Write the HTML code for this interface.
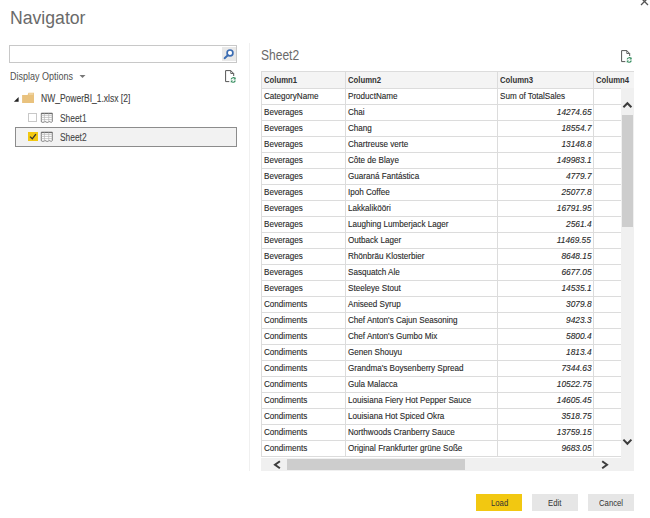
<!DOCTYPE html>
<html><head><meta charset="utf-8">
<style>
*{margin:0;padding:0;box-sizing:border-box}
html,body{width:650px;height:518px;overflow:hidden;background:#fff;font-family:"Liberation Sans",sans-serif;color:#333}
.a{position:absolute}
.t{position:absolute;white-space:nowrap;line-height:normal}
</style></head><body>
<svg class="a" style="left:639px;top:-4px" width="11" height="11" viewBox="0 0 11 11"><path d="M2 2 L9 9 M9 2 L2 9" stroke="#555" stroke-width="1.3"/></svg>
<!-- search -->
<div class="a" style="left:9px;top:45px;width:228px;height:18px;border:1px solid #c8c8c8;background:#fff"></div>
<div class="a" style="left:222px;top:47px;width:13.5px;height:14px;background:#e8e8e8"></div>
<svg class="a" style="left:222px;top:47px" width="15" height="15" viewBox="0 0 15 15"><circle cx="8" cy="5.9" r="2.9" fill="#fff" stroke="#3b6db3" stroke-width="1.7"/><path d="M5.8 8.2 L2.6 11.2" stroke="#3b6db3" stroke-width="1.9" stroke-linecap="round"/></svg>
<svg class="a" style="left:79px;top:74px" width="7" height="5" viewBox="0 0 7 5"><path d="M0.5 1 L6.5 1 L3.5 4 Z" fill="#777"/></svg>
<svg class="a" style="left:220px;top:66px" width="22" height="20" viewBox="0 0 22 20"><path d="M9.3 15.6 H5.6 V4.6 H10.8 L13.7 7.5 V10" fill="none" stroke="#555" stroke-width="1"/><path d="M10.8 4.6 V7.5 H13.7" fill="none" stroke="#555" stroke-width="0.9"/><path d="M11.1 13.4 A2.3 2.3 0 0 1 15.2 12.6" fill="none" stroke="#3a8f62" stroke-width="1.1"/><path d="M15.6 11.2 V13.5 H13.4 Z" fill="#3a8f62"/><path d="M15.3 14.5 A2.3 2.3 0 0 1 11.2 15.3" fill="none" stroke="#3a8f62" stroke-width="1.1"/><path d="M10.8 16.7 V14.4 H13 Z" fill="#3a8f62"/></svg>
<div class="a" style="left:249px;top:43px;width:1px;height:428px;background:#f0f0f0"></div>
<!-- tree -->
<svg class="a" style="left:10px;top:88px" width="30" height="20" viewBox="0 0 30 20"><path d="M8.6 9 V13.7 H3.9 Z" fill="#222"/><path d="M12.1 6.9 H17.6 L18.5 4.8 H24 V15 H12.1 Z" fill="#e9c27e"/><path d="M19 5.6 H23.3 V6.6 H18.7 Z" fill="#f6e2bc"/></svg>
<div class="a" style="left:15px;top:127px;width:222px;height:20px;border:1px solid #8c8c8c;background:#f2f2f2"></div>
<div class="a" style="left:28.3px;top:113.1px;width:9px;height:9px;border:1.2px solid #c8c8c8;background:#fff"></div>
<div class="a" style="left:28px;top:132px;width:9.5px;height:9px;background:#f2c811"></div>
<svg class="a" style="left:28px;top:132px" width="10" height="9" viewBox="0 0 10 9"><path d="M2 4.6 L4.3 6.8 L7.9 2.2" fill="none" stroke="#333" stroke-width="1.3"/></svg>
<svg class="a" style="left:40.2px;top:112.2px" width="14" height="12" viewBox="0 0 14 12"><path d="M1.3 1.2 H12.3 V9.6 Q11.3 10.8 10.3 10 Q9.3 9.2 8.3 10 Q7.2 10.9 6.1 10 Q5.1 9.1 4.1 10 Q3 10.9 1.3 9.8 Z" fill="#fff" stroke="#707070" stroke-width="0.9"/><path d="M1.3 1.6 H12.3" stroke="#666" stroke-width="1"/><path d="M1.5 3.6 H12.1 M1.5 5.5 H12.1 M1.5 7.6 H12.1 M4.4 1.5 V9.6 M8.7 1.5 V9.6" stroke="#b8b8b8" stroke-width="0.7"/></svg>
<svg class="a" style="left:40.2px;top:131.2px" width="14" height="12" viewBox="0 0 14 12"><path d="M1.3 1.2 H12.3 V9.6 Q11.3 10.8 10.3 10 Q9.3 9.2 8.3 10 Q7.2 10.9 6.1 10 Q5.1 9.1 4.1 10 Q3 10.9 1.3 9.8 Z" fill="#fff" stroke="#707070" stroke-width="0.9"/><path d="M1.3 1.6 H12.3" stroke="#666" stroke-width="1"/><path d="M1.5 3.6 H12.1 M1.5 5.5 H12.1 M1.5 7.6 H12.1 M4.4 1.5 V9.6 M8.7 1.5 V9.6" stroke="#b8b8b8" stroke-width="0.7"/></svg>
<svg class="a" style="left:616px;top:45.5px" width="22" height="20" viewBox="0 0 22 20"><path d="M9.3 15.6 H5.6 V4.6 H10.8 L13.7 7.5 V10" fill="none" stroke="#555" stroke-width="1"/><path d="M10.8 4.6 V7.5 H13.7" fill="none" stroke="#555" stroke-width="0.9"/><path d="M11.1 13.4 A2.3 2.3 0 0 1 15.2 12.6" fill="none" stroke="#3a8f62" stroke-width="1.1"/><path d="M15.6 11.2 V13.5 H13.4 Z" fill="#3a8f62"/><path d="M15.3 14.5 A2.3 2.3 0 0 1 11.2 15.3" fill="none" stroke="#3a8f62" stroke-width="1.1"/><path d="M10.8 16.7 V14.4 H13 Z" fill="#3a8f62"/></svg>
<!-- table -->
<div class="a" style="left:261px;top:71px;width:373px;height:17px;background:#f4f4f4"></div>
<div class="a" style="left:261px;top:71px;width:373px;height:1px;background:#dcdcdc"></div>
<div class="a" style="left:261px;top:88px;width:373px;height:1px;background:#dcdcdc"></div>
<div class="a" style="left:261px;top:104px;width:373px;height:1px;background:#dcdcdc"></div>
<div class="a" style="left:261px;top:120px;width:373px;height:1px;background:#dcdcdc"></div>
<div class="a" style="left:261px;top:136px;width:373px;height:1px;background:#dcdcdc"></div>
<div class="a" style="left:261px;top:152px;width:373px;height:1px;background:#dcdcdc"></div>
<div class="a" style="left:261px;top:168px;width:373px;height:1px;background:#dcdcdc"></div>
<div class="a" style="left:261px;top:184px;width:373px;height:1px;background:#dcdcdc"></div>
<div class="a" style="left:261px;top:200px;width:373px;height:1px;background:#dcdcdc"></div>
<div class="a" style="left:261px;top:216px;width:373px;height:1px;background:#dcdcdc"></div>
<div class="a" style="left:261px;top:232px;width:373px;height:1px;background:#dcdcdc"></div>
<div class="a" style="left:261px;top:248px;width:373px;height:1px;background:#dcdcdc"></div>
<div class="a" style="left:261px;top:264px;width:373px;height:1px;background:#dcdcdc"></div>
<div class="a" style="left:261px;top:280px;width:373px;height:1px;background:#dcdcdc"></div>
<div class="a" style="left:261px;top:296px;width:373px;height:1px;background:#dcdcdc"></div>
<div class="a" style="left:261px;top:312px;width:373px;height:1px;background:#dcdcdc"></div>
<div class="a" style="left:261px;top:328px;width:373px;height:1px;background:#dcdcdc"></div>
<div class="a" style="left:261px;top:344px;width:373px;height:1px;background:#dcdcdc"></div>
<div class="a" style="left:261px;top:360px;width:373px;height:1px;background:#dcdcdc"></div>
<div class="a" style="left:261px;top:376px;width:373px;height:1px;background:#dcdcdc"></div>
<div class="a" style="left:261px;top:392px;width:373px;height:1px;background:#dcdcdc"></div>
<div class="a" style="left:261px;top:408px;width:373px;height:1px;background:#dcdcdc"></div>
<div class="a" style="left:261px;top:424px;width:373px;height:1px;background:#dcdcdc"></div>
<div class="a" style="left:261px;top:440px;width:373px;height:1px;background:#dcdcdc"></div>
<div class="a" style="left:261px;top:456px;width:373px;height:1px;background:#dcdcdc"></div>
<div class="a" style="left:261px;top:71px;width:1px;height:386px;background:#dcdcdc"></div>
<div class="a" style="left:345px;top:71px;width:1px;height:386px;background:#dcdcdc"></div>
<div class="a" style="left:497px;top:71px;width:1px;height:386px;background:#dcdcdc"></div>
<div class="a" style="left:593px;top:71px;width:1px;height:386px;background:#dcdcdc"></div>
<div class="t" style="left:263.50px;top:74.66px;font-size:9px;color:#333;transform:scaleX(0.86);transform-origin:left top;font-weight:bold">Column1</div>
<div class="t" style="left:347.50px;top:74.66px;font-size:9px;color:#333;transform:scaleX(0.86);transform-origin:left top;font-weight:bold">Column2</div>
<div class="t" style="left:499.50px;top:74.66px;font-size:9px;color:#333;transform:scaleX(0.86);transform-origin:left top;font-weight:bold">Column3</div>
<div class="t" style="left:595.50px;top:74.66px;font-size:9px;color:#333;transform:scaleX(0.86);transform-origin:left top;font-weight:bold">Column4</div>
<div class="t" style="left:263.50px;top:91.45px;font-size:9px;color:#262626;transform:scaleX(0.9);transform-origin:left top;-webkit-text-stroke:0.12px #333">CategoryName</div>
<div class="t" style="left:347.50px;top:91.45px;font-size:9px;color:#262626;transform:scaleX(0.9);transform-origin:left top;-webkit-text-stroke:0.12px #333">ProductName</div>
<div class="t" style="left:499.50px;top:91.45px;font-size:9px;color:#262626;transform:scaleX(0.9);transform-origin:left top;-webkit-text-stroke:0.12px #333">Sum of TotalSales</div>
<div class="t" style="left:263.50px;top:107.45px;font-size:9px;color:#262626;transform:scaleX(0.9);transform-origin:left top;-webkit-text-stroke:0.12px #333">Beverages</div>
<div class="t" style="left:347.50px;top:107.45px;font-size:9px;color:#262626;transform:scaleX(0.9);transform-origin:left top;-webkit-text-stroke:0.12px #333">Chai</div>
<div class="t" style="right:58.80px;top:107.45px;font-size:9px;color:#262626;transform:scaleX(0.925);transform-origin:right top;font-style:italic;-webkit-text-stroke:0.12px #333">14274.65</div>
<div class="t" style="left:263.50px;top:123.45px;font-size:9px;color:#262626;transform:scaleX(0.9);transform-origin:left top;-webkit-text-stroke:0.12px #333">Beverages</div>
<div class="t" style="left:347.50px;top:123.45px;font-size:9px;color:#262626;transform:scaleX(0.9);transform-origin:left top;-webkit-text-stroke:0.12px #333">Chang</div>
<div class="t" style="right:58.80px;top:123.45px;font-size:9px;color:#262626;transform:scaleX(0.925);transform-origin:right top;font-style:italic;-webkit-text-stroke:0.12px #333">18554.7</div>
<div class="t" style="left:263.50px;top:139.45px;font-size:9px;color:#262626;transform:scaleX(0.9);transform-origin:left top;-webkit-text-stroke:0.12px #333">Beverages</div>
<div class="t" style="left:347.50px;top:139.45px;font-size:9px;color:#262626;transform:scaleX(0.9);transform-origin:left top;-webkit-text-stroke:0.12px #333">Chartreuse verte</div>
<div class="t" style="right:58.80px;top:139.45px;font-size:9px;color:#262626;transform:scaleX(0.925);transform-origin:right top;font-style:italic;-webkit-text-stroke:0.12px #333">13148.8</div>
<div class="t" style="left:263.50px;top:155.45px;font-size:9px;color:#262626;transform:scaleX(0.9);transform-origin:left top;-webkit-text-stroke:0.12px #333">Beverages</div>
<div class="t" style="left:347.50px;top:155.45px;font-size:9px;color:#262626;transform:scaleX(0.9);transform-origin:left top;-webkit-text-stroke:0.12px #333">Côte de Blaye</div>
<div class="t" style="right:58.80px;top:155.45px;font-size:9px;color:#262626;transform:scaleX(0.925);transform-origin:right top;font-style:italic;-webkit-text-stroke:0.12px #333">149983.1</div>
<div class="t" style="left:263.50px;top:171.45px;font-size:9px;color:#262626;transform:scaleX(0.9);transform-origin:left top;-webkit-text-stroke:0.12px #333">Beverages</div>
<div class="t" style="left:347.50px;top:171.45px;font-size:9px;color:#262626;transform:scaleX(0.9);transform-origin:left top;-webkit-text-stroke:0.12px #333">Guaraná Fantástica</div>
<div class="t" style="right:58.80px;top:171.45px;font-size:9px;color:#262626;transform:scaleX(0.925);transform-origin:right top;font-style:italic;-webkit-text-stroke:0.12px #333">4779.7</div>
<div class="t" style="left:263.50px;top:187.45px;font-size:9px;color:#262626;transform:scaleX(0.9);transform-origin:left top;-webkit-text-stroke:0.12px #333">Beverages</div>
<div class="t" style="left:347.50px;top:187.45px;font-size:9px;color:#262626;transform:scaleX(0.9);transform-origin:left top;-webkit-text-stroke:0.12px #333">Ipoh Coffee</div>
<div class="t" style="right:58.80px;top:187.45px;font-size:9px;color:#262626;transform:scaleX(0.925);transform-origin:right top;font-style:italic;-webkit-text-stroke:0.12px #333">25077.8</div>
<div class="t" style="left:263.50px;top:203.45px;font-size:9px;color:#262626;transform:scaleX(0.9);transform-origin:left top;-webkit-text-stroke:0.12px #333">Beverages</div>
<div class="t" style="left:347.50px;top:203.45px;font-size:9px;color:#262626;transform:scaleX(0.9);transform-origin:left top;-webkit-text-stroke:0.12px #333">Lakkalikööri</div>
<div class="t" style="right:58.80px;top:203.45px;font-size:9px;color:#262626;transform:scaleX(0.925);transform-origin:right top;font-style:italic;-webkit-text-stroke:0.12px #333">16791.95</div>
<div class="t" style="left:263.50px;top:219.45px;font-size:9px;color:#262626;transform:scaleX(0.9);transform-origin:left top;-webkit-text-stroke:0.12px #333">Beverages</div>
<div class="t" style="left:347.50px;top:219.45px;font-size:9px;color:#262626;transform:scaleX(0.9);transform-origin:left top;-webkit-text-stroke:0.12px #333">Laughing Lumberjack Lager</div>
<div class="t" style="right:58.80px;top:219.45px;font-size:9px;color:#262626;transform:scaleX(0.925);transform-origin:right top;font-style:italic;-webkit-text-stroke:0.12px #333">2561.4</div>
<div class="t" style="left:263.50px;top:235.45px;font-size:9px;color:#262626;transform:scaleX(0.9);transform-origin:left top;-webkit-text-stroke:0.12px #333">Beverages</div>
<div class="t" style="left:347.50px;top:235.45px;font-size:9px;color:#262626;transform:scaleX(0.9);transform-origin:left top;-webkit-text-stroke:0.12px #333">Outback Lager</div>
<div class="t" style="right:58.80px;top:235.45px;font-size:9px;color:#262626;transform:scaleX(0.925);transform-origin:right top;font-style:italic;-webkit-text-stroke:0.12px #333">11469.55</div>
<div class="t" style="left:263.50px;top:251.46px;font-size:9px;color:#262626;transform:scaleX(0.9);transform-origin:left top;-webkit-text-stroke:0.12px #333">Beverages</div>
<div class="t" style="left:347.50px;top:251.46px;font-size:9px;color:#262626;transform:scaleX(0.9);transform-origin:left top;-webkit-text-stroke:0.12px #333">Rhönbräu Klosterbier</div>
<div class="t" style="right:58.80px;top:251.46px;font-size:9px;color:#262626;transform:scaleX(0.925);transform-origin:right top;font-style:italic;-webkit-text-stroke:0.12px #333">8648.15</div>
<div class="t" style="left:263.50px;top:267.46px;font-size:9px;color:#262626;transform:scaleX(0.9);transform-origin:left top;-webkit-text-stroke:0.12px #333">Beverages</div>
<div class="t" style="left:347.50px;top:267.46px;font-size:9px;color:#262626;transform:scaleX(0.9);transform-origin:left top;-webkit-text-stroke:0.12px #333">Sasquatch Ale</div>
<div class="t" style="right:58.80px;top:267.46px;font-size:9px;color:#262626;transform:scaleX(0.925);transform-origin:right top;font-style:italic;-webkit-text-stroke:0.12px #333">6677.05</div>
<div class="t" style="left:263.50px;top:283.46px;font-size:9px;color:#262626;transform:scaleX(0.9);transform-origin:left top;-webkit-text-stroke:0.12px #333">Beverages</div>
<div class="t" style="left:347.50px;top:283.46px;font-size:9px;color:#262626;transform:scaleX(0.9);transform-origin:left top;-webkit-text-stroke:0.12px #333">Steeleye Stout</div>
<div class="t" style="right:58.80px;top:283.46px;font-size:9px;color:#262626;transform:scaleX(0.925);transform-origin:right top;font-style:italic;-webkit-text-stroke:0.12px #333">14535.1</div>
<div class="t" style="left:263.50px;top:299.46px;font-size:9px;color:#262626;transform:scaleX(0.9);transform-origin:left top;-webkit-text-stroke:0.12px #333">Condiments</div>
<div class="t" style="left:347.50px;top:299.46px;font-size:9px;color:#262626;transform:scaleX(0.9);transform-origin:left top;-webkit-text-stroke:0.12px #333">Aniseed Syrup</div>
<div class="t" style="right:58.80px;top:299.46px;font-size:9px;color:#262626;transform:scaleX(0.925);transform-origin:right top;font-style:italic;-webkit-text-stroke:0.12px #333">3079.8</div>
<div class="t" style="left:263.50px;top:315.46px;font-size:9px;color:#262626;transform:scaleX(0.9);transform-origin:left top;-webkit-text-stroke:0.12px #333">Condiments</div>
<div class="t" style="left:347.50px;top:315.46px;font-size:9px;color:#262626;transform:scaleX(0.9);transform-origin:left top;-webkit-text-stroke:0.12px #333">Chef Anton's Cajun Seasoning</div>
<div class="t" style="right:58.80px;top:315.46px;font-size:9px;color:#262626;transform:scaleX(0.925);transform-origin:right top;font-style:italic;-webkit-text-stroke:0.12px #333">9423.3</div>
<div class="t" style="left:263.50px;top:331.46px;font-size:9px;color:#262626;transform:scaleX(0.9);transform-origin:left top;-webkit-text-stroke:0.12px #333">Condiments</div>
<div class="t" style="left:347.50px;top:331.46px;font-size:9px;color:#262626;transform:scaleX(0.9);transform-origin:left top;-webkit-text-stroke:0.12px #333">Chef Anton's Gumbo Mix</div>
<div class="t" style="right:58.80px;top:331.46px;font-size:9px;color:#262626;transform:scaleX(0.925);transform-origin:right top;font-style:italic;-webkit-text-stroke:0.12px #333">5800.4</div>
<div class="t" style="left:263.50px;top:347.46px;font-size:9px;color:#262626;transform:scaleX(0.9);transform-origin:left top;-webkit-text-stroke:0.12px #333">Condiments</div>
<div class="t" style="left:347.50px;top:347.46px;font-size:9px;color:#262626;transform:scaleX(0.9);transform-origin:left top;-webkit-text-stroke:0.12px #333">Genen Shouyu</div>
<div class="t" style="right:58.80px;top:347.46px;font-size:9px;color:#262626;transform:scaleX(0.925);transform-origin:right top;font-style:italic;-webkit-text-stroke:0.12px #333">1813.4</div>
<div class="t" style="left:263.50px;top:363.46px;font-size:9px;color:#262626;transform:scaleX(0.9);transform-origin:left top;-webkit-text-stroke:0.12px #333">Condiments</div>
<div class="t" style="left:347.50px;top:363.46px;font-size:9px;color:#262626;transform:scaleX(0.9);transform-origin:left top;-webkit-text-stroke:0.12px #333">Grandma's Boysenberry Spread</div>
<div class="t" style="right:58.80px;top:363.46px;font-size:9px;color:#262626;transform:scaleX(0.925);transform-origin:right top;font-style:italic;-webkit-text-stroke:0.12px #333">7344.63</div>
<div class="t" style="left:263.50px;top:379.46px;font-size:9px;color:#262626;transform:scaleX(0.9);transform-origin:left top;-webkit-text-stroke:0.12px #333">Condiments</div>
<div class="t" style="left:347.50px;top:379.46px;font-size:9px;color:#262626;transform:scaleX(0.9);transform-origin:left top;-webkit-text-stroke:0.12px #333">Gula Malacca</div>
<div class="t" style="right:58.80px;top:379.46px;font-size:9px;color:#262626;transform:scaleX(0.925);transform-origin:right top;font-style:italic;-webkit-text-stroke:0.12px #333">10522.75</div>
<div class="t" style="left:263.50px;top:395.46px;font-size:9px;color:#262626;transform:scaleX(0.9);transform-origin:left top;-webkit-text-stroke:0.12px #333">Condiments</div>
<div class="t" style="left:347.50px;top:395.46px;font-size:9px;color:#262626;transform:scaleX(0.9);transform-origin:left top;-webkit-text-stroke:0.12px #333">Louisiana Fiery Hot Pepper Sauce</div>
<div class="t" style="right:58.80px;top:395.46px;font-size:9px;color:#262626;transform:scaleX(0.925);transform-origin:right top;font-style:italic;-webkit-text-stroke:0.12px #333">14605.45</div>
<div class="t" style="left:263.50px;top:411.46px;font-size:9px;color:#262626;transform:scaleX(0.9);transform-origin:left top;-webkit-text-stroke:0.12px #333">Condiments</div>
<div class="t" style="left:347.50px;top:411.46px;font-size:9px;color:#262626;transform:scaleX(0.9);transform-origin:left top;-webkit-text-stroke:0.12px #333">Louisiana Hot Spiced Okra</div>
<div class="t" style="right:58.80px;top:411.46px;font-size:9px;color:#262626;transform:scaleX(0.925);transform-origin:right top;font-style:italic;-webkit-text-stroke:0.12px #333">3518.75</div>
<div class="t" style="left:263.50px;top:427.46px;font-size:9px;color:#262626;transform:scaleX(0.9);transform-origin:left top;-webkit-text-stroke:0.12px #333">Condiments</div>
<div class="t" style="left:347.50px;top:427.46px;font-size:9px;color:#262626;transform:scaleX(0.9);transform-origin:left top;-webkit-text-stroke:0.12px #333">Northwoods Cranberry Sauce</div>
<div class="t" style="right:58.80px;top:427.46px;font-size:9px;color:#262626;transform:scaleX(0.925);transform-origin:right top;font-style:italic;-webkit-text-stroke:0.12px #333">13759.15</div>
<div class="t" style="left:263.50px;top:443.46px;font-size:9px;color:#262626;transform:scaleX(0.9);transform-origin:left top;-webkit-text-stroke:0.12px #333">Condiments</div>
<div class="t" style="left:347.50px;top:443.46px;font-size:9px;color:#262626;transform:scaleX(0.9);transform-origin:left top;-webkit-text-stroke:0.12px #333">Original Frankfurter grüne Soße</div>
<div class="t" style="right:58.80px;top:443.46px;font-size:9px;color:#262626;transform:scaleX(0.925);transform-origin:right top;font-style:italic;-webkit-text-stroke:0.12px #333">9683.05</div>
<div class="a" style="left:621px;top:88px;width:13px;height:383px;background:#f0f0f0"></div>
<div class="a" style="left:622px;top:115px;width:11px;height:112px;background:#cdcdcd"></div>
<svg class="a" style="left:621px;top:101px" width="13" height="9" viewBox="0 0 13 9"><path d="M2.4 6.3 L6.4 2.2 L10.4 6.3" fill="none" stroke="#3c3c3c" stroke-width="2"/></svg>
<svg class="a" style="left:621px;top:437px" width="13" height="9" viewBox="0 0 13 9"><path d="M2.4 2.6 L6.4 6.7 L10.4 2.6" fill="none" stroke="#3c3c3c" stroke-width="2"/></svg>
<div class="a" style="left:261px;top:458px;width:360px;height:13px;background:#f0f0f0"></div>
<div class="a" style="left:287px;top:459px;width:178px;height:11px;background:#cdcdcd"></div>
<svg class="a" style="left:272px;top:458px" width="9" height="13" viewBox="0 0 9 13"><path d="M7.9 3.3 L3.0 6.8 L7.9 10.3" fill="none" stroke="#3c3c3c" stroke-width="2"/></svg>
<svg class="a" style="left:600px;top:458px" width="9" height="13" viewBox="0 0 9 13"><path d="M2.2 3.2 L7.0 6.7 L2.2 10.2" fill="none" stroke="#3c3c3c" stroke-width="2"/></svg>
<!-- buttons -->
<div class="a" style="left:476px;top:494px;width:46px;height:17px;background:#f2c811"></div>
<div class="a" style="left:532px;top:494px;width:46px;height:17px;background:#e6e6e6"></div>
<div class="a" style="left:588px;top:494px;width:46px;height:17px;background:#e6e6e6"></div>
<div class="t" style="left:10.40px;top:7.51px;font-size:18px;color:#6a6a6a;transform:scaleX(0.98);transform-origin:left top;">Navigator</div>
<div class="t" style="left:9.90px;top:70.95px;font-size:10px;color:#505050;transform:scaleX(0.9);transform-origin:left top;">Display Options</div>
<div class="t" style="left:41.10px;top:92.75px;font-size:10px;color:#404040;transform:scaleX(0.85);transform-origin:left top;-webkit-text-stroke:0.1px #444">NW_PowerBI_1.xlsx [2]</div>
<div class="t" style="left:59.80px;top:112.85px;font-size:10px;color:#444;transform:scaleX(0.84);transform-origin:left top;-webkit-text-stroke:0.08px #444">Sheet1</div>
<div class="t" style="left:59.80px;top:131.95px;font-size:10px;color:#444;transform:scaleX(0.84);transform-origin:left top;-webkit-text-stroke:0.08px #444">Sheet2</div>
<div class="t" style="left:261.30px;top:47.28px;font-size:14.5px;color:#6a6a6a;transform:scaleX(0.83);transform-origin:left top;">Sheet2</div>
<div class="t" style="left:491.00px;top:497.92px;font-size:8.6px;color:#333;transform:scaleX(0.9);transform-origin:left top;">Load</div>
<div class="t" style="left:548.30px;top:497.92px;font-size:8.6px;color:#333;transform:scaleX(0.9);transform-origin:left top;">Edit</div>
<div class="t" style="left:599.00px;top:497.92px;font-size:8.6px;color:#333;transform:scaleX(0.9);transform-origin:left top;">Cancel</div>
</body></html>
